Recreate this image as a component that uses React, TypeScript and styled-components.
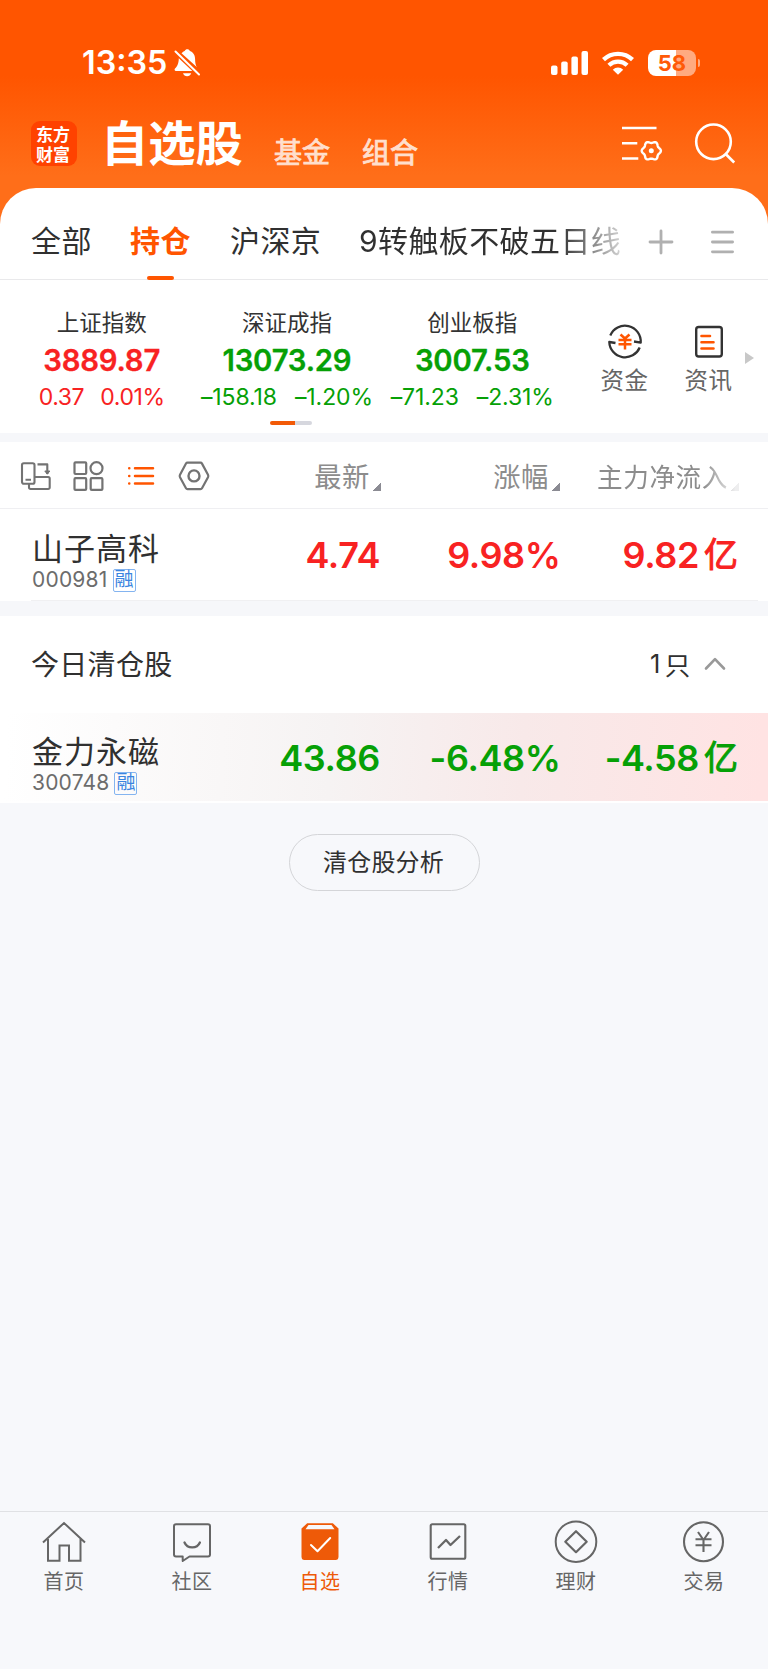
import React from "react";
import styled, { createGlobalStyle } from "styled-components";

const FONT = `Inter, "Noto Sans CJK SC", sans-serif`;
const ORANGE = "#ff5500";
const RED = "#f82222";
const GREEN = "#06a006";

const GlobalStyle = createGlobalStyle`
  * { box-sizing: border-box; }
  body { margin: 0; background: #fff; font-family: ${FONT}; color: #303030; }
  svg { display: block; flex: none; overflow: visible; }
`;

const Screen = styled.div`
  width: 768px;
  height: 1669px;
  display: flex;
  flex-direction: column;
  background: #f7f8fb;
  white-space: nowrap;
`;

/* ---------- header ---------- */
const Hero = styled.header`
  height: 228px;
  margin-bottom: -40px;
  flex: none;
  background: linear-gradient(180deg, #ff5500 0, #ff5500 76px, #ff6e19 176px, #ff6e19 100%);
`;
const StatusBar = styled.div`
  height: 100px;
  padding: 25px 68px 0 82px;
  display: flex;
  align-items: center;
  color: #fff;
`;
const Clock = styled.span`
  width: 92px;
  font-size: 32.3px;
  font-weight: 600;
  line-height: 40px;
`;
const StatusIcons = styled.div`
  margin-left: auto;
  display: flex;
  align-items: center;
  gap: 14px;
`;
const BatteryWrap = styled.div`
  display: flex;
  align-items: center;
  gap: 2px;
`;
const Battery = styled.div`
  width: 48px;
  height: 26px;
  border-radius: 8px;
  background: linear-gradient(90deg, #fff 58%, #ffaa80 58%);
  color: #ff5a08;
  font-size: 22px;
  font-weight: 700;
  line-height: 26px;
  text-align: center;
`;
const BatteryTip = styled.i`
  width: 2px;
  height: 8px;
  border-radius: 0 3px 3px 0;
  background: #ffaa80;
`;
const TitleBar = styled.div`
  height: 88px;
  padding: 0 33px 0 31px;
  display: flex;
  align-items: flex-start;
  color: #fff;
`;
const Logo = styled.div`
  width: 46px;
  height: 45px;
  margin-top: 21px;
  padding: 3px 6px 0 5px;
  border-radius: 9px;
  background: #ff4200;
  font: 700 17px/19.5px "Noto Sans CJK SC", sans-serif;
  white-space: normal;
  word-break: break-all;
`;
const Title = styled.h1`
  margin: 13.5px 0 0 24px;
  width: 173px;
  font-size: 47.3px;
  font-weight: 700;
  line-height: 60px;
`;
const SubTitle = styled.span`
  width: 88px;
  margin-top: 33px;
  font-size: 28px;
  line-height: 40px;
  color: #ffdfcd;
  -webkit-text-stroke: 0.9px #ffdfcd;
`;
const HeaderActions = styled.div`
  display: flex;
  gap: 33px;
  margin: 23px 0 0 auto;
`;

/* ---------- group tabs ---------- */
const Tabs = styled.nav`
  height: 92px;
  flex: none;
  padding: 0 34.5px 0 31px;
  display: flex;
  background: #fff;
  border-bottom: 1px solid #e9e9eb;
  border-radius: 36px 36px 0 0;
`;
const Tab = styled.div<{ $w: number; $active?: boolean; $fade?: boolean }>`
  width: ${(p) => p.$w}px;
  height: 92px;
  padding-top: 33px;
  display: flex;
  flex-direction: column;
  font-size: 30px;
  line-height: 40px;
  letter-spacing: 0.4px;
  ${(p) => p.$active && `color: ${ORANGE}; font-weight: 700;`}
  ${(p) =>
    p.$fade &&
    `background: linear-gradient(90deg, #303030 200px, #d8d8d8 264px); background-clip: text; -webkit-background-clip: text; color: transparent;`}
`;
const TabLine = styled.i`
  width: 27px;
  height: 4px;
  margin: 15px 0 0 17px;
  border-radius: 2px;
  background: ${ORANGE};
`;
const TabActions = styled.div`
  display: flex;
  gap: 38px;
  align-items: center;
  margin-left: auto;
  height: 107px;
`;

/* ---------- market indices ---------- */
const Indices = styled.section`
  height: 153px;
  flex: none;
  display: flex;
  padding-left: 9px;
  background: #fff;
`;
const IndexArea = styled.div`
  width: 563px;
  flex: none;
`;
const IndexList = styled.div`
  display: flex;
  padding-top: 26px;
  height: 141px;
`;
const IndexCell = styled.div<{ $color: string }>`
  width: 185.3px;
  display: flex;
  flex-direction: column;
  align-items: center;
  color: ${(p) => p.$color};
`;
const IndexName = styled.span`
  font-size: 22.5px;
  line-height: 34px;
  color: #333;
`;
const IndexValue = styled.strong`
  font-size: 29.3px;
  font-weight: 600;
  line-height: 40px;
  padding-top: 1px;
  letter-spacing: -0.2px;
  -webkit-text-stroke: 0.3px currentColor;
`;
const IndexChange = styled.span<{ $wide: boolean }>`
  display: flex;
  gap: ${(p) => (p.$wide ? 18 : 16)}px;
  font-size: 23px;
  line-height: 33px;
  letter-spacing: ${(p) => (p.$wide ? -0.1 : -0.4)}px;
`;
const Pager = styled.div`
  width: 42px;
  height: 4px;
  margin-left: 261px;
  border-radius: 2px;
  background: linear-gradient(90deg, #f25a07 25px, #d6d7de 25px);
`;
const Shortcuts = styled.div`
  display: flex;
  flex: none;
  padding: 44px 0 0 10.5px;
`;
const Shortcut = styled.div`
  width: 84px;
  display: flex;
  flex-direction: column;
  align-items: center;
  gap: 4px;
  font-size: 23.5px;
  line-height: 34px;
  letter-spacing: 0.6px;
  color: #666;
`;
const MoreArrow = styled.i`
  margin: 72px 0 0 -5.5px;
  width: 0;
  height: 0;
  border: solid transparent;
  border-width: 6px 0 6px 9px;
  border-left-color: #c8c8c8;
`;

/* ---------- stock table ---------- */
const Gap = styled.div<{ $h: number }>`
  height: ${(p) => p.$h}px;
  flex: none;
  background: #f6f7fa;
`;
const Toolbar = styled.div`
  height: 67px;
  flex: none;
  padding-left: 20px;
  display: flex;
  align-items: center;
  background: #fff;
  border-bottom: 1px solid #efeff2;
`;
const ViewModes = styled.div`
  width: 361px;
  display: flex;
  gap: 22.4px;
  align-items: center;
  margin: 1px -67px 0 0;
`;
const Column = styled.div<{ $w: number; $size?: number; $fade?: boolean }>`
  width: ${(p) => p.$w}px;
  margin-top: 5px;
  display: flex;
  justify-content: flex-end;
  align-items: flex-end;
  gap: 3px;
  font-size: ${(p) => p.$size ?? 27.3}px;
  line-height: 36px;
  letter-spacing: 0.6px;
  color: #8c8c8c;
  ${(p) => p.$fade && `mask-image: linear-gradient(90deg, #000 80%, rgba(0, 0, 0, 0.15) 98%);`}
`;
const SortMark = styled.i`
  width: 8px;
  height: 8px;
  margin-bottom: 5px;
  background: linear-gradient(135deg, transparent 50%, #8b8b93 50%);
`;
const StockRow = styled.div<{ $cleared?: boolean }>`
  height: ${(p) => (p.$cleared ? 88 : 91)}px;
  flex: none;
  padding: ${(p) => (p.$cleared ? 19 : 20)}px 30px 0 32px;
  display: flex;
  background: ${(p) => (p.$cleared ? "linear-gradient(93deg, #fff 1%, #f6f3f3 43%, #f8e9e9 68%, #ffe3e3 99%)" : "#fff")};
`;
const StockId = styled.div`
  width: 170px;
`;
const StockName = styled.div`
  font-size: 31px;
  line-height: 40px;
  height: 41px;
  letter-spacing: 1px;
`;
const StockCode = styled.div`
  display: flex;
  align-items: center;
  gap: 5px;
  height: 20px;
  font-size: 21px;
  line-height: 20px;
  letter-spacing: 0.2px;
  color: #6c6c6c;
`;
const MarginBadge = styled.span`
  width: 23px;
  height: 23px;
  border: 1.5px solid #84b4f0;
  border-radius: 2px;
  font-size: 19px;
  line-height: 20px;
  letter-spacing: 0;
  display: flex;
  justify-content: center;
  color: #3b85e0;
`;
const Figure = styled.div<{ $w: number; $color: string }>`
  width: ${(p) => p.$w}px;
  display: flex;
  justify-content: flex-end;
  gap: 4px;
  padding-top: 6px;
  font-size: 36px;
  font-weight: 600;
  line-height: 40px;
  letter-spacing: -0.4px;
  color: ${(p) => p.$color};
`;
const Unit = styled.span`
  margin-left: 1px;
  font-size: 34px;
  font-weight: 400;
  letter-spacing: 0;
  -webkit-text-stroke: 1px currentColor;
`;
const Divider = styled.div<{ $clear?: boolean }>`
  height: ${(p) => (p.$clear ? 2 : 1)}px;
  flex: none;
  padding: 0 10px 0 31px;
  background: #fff;
  &::after {
    content: "";
    display: block;
    height: 1px;
    background: ${(p) => (p.$clear ? "#fff" : "#f0f0f2")};
  }
`;
const SectionHead = styled.div`
  height: 97px;
  flex: none;
  padding: 0 42.5px 4px 31px;
  display: flex;
  align-items: center;
  background: #fff;
  font-size: 28px;
  letter-spacing: 0.3px;
`;
const Count = styled.span`
  display: flex;
  align-items: center;
  gap: 4px;
  margin: 2px 13px 0 auto;
  font-size: 25.5px;
`;
const Analysis = styled.button`
  width: 191px;
  height: 57px;
  flex: none;
  margin: 31px auto 0;
  padding: 1px 1px 0 0;
  border: 1.5px solid #d4d5d8;
  border-radius: 29px;
  background: transparent;
  font: 400 24px/36px ${FONT};
  letter-spacing: 0.2px;
  color: #303030;
`;

/* ---------- bottom navigation ---------- */
const BottomNav = styled.nav`
  height: 158px;
  flex: none;
  margin-top: auto;
  display: flex;
  border-top: 1px solid #e0e1e4;
`;
const NavItem = styled.div<{ $active?: boolean }>`
  width: 128px;
  padding-top: 9px;
  display: flex;
  flex-direction: column;
  align-items: center;
  gap: 1px;
  font-size: 20px;
  line-height: 32px;
  letter-spacing: 0.5px;
  color: ${(p) => (p.$active ? "#ee5a08" : "#666")};
`;

/* ---------- icons ---------- */
type IconProps = { w: number; h: number; stroke?: string; sw?: number; children: React.ReactNode };
const Icon = ({ w, h, stroke = "currentColor", sw = 2, children }: IconProps) => (
  <svg width={w} height={h} viewBox={`0 0 ${w} ${h}`} fill="none" stroke={stroke} strokeWidth={sw} strokeLinejoin="round">
    {children}
  </svg>
);

/* six-lobed gear outline */
const gearPoints = (cx: number, cy: number) =>
  Array.from({ length: 72 }, (_, i) => {
    const a = (i * Math.PI) / 36;
    const r = 8.7 + 0.9 * Math.cos(6 * a);
    return `${(cx + r * Math.cos(a)).toFixed(2)},${(cy + r * Math.sin(a)).toFixed(2)}`;
  }).join(" ");

const BellOff = () => (
  <Icon w={26} h={28} sw={0}>
    <path
      fill="#fff"
      d="M7.5 4.2C8.700 3 9.800 2.300 10.700 2c.5-1.200 1.500-1.800 2.600-1.800s2.100.6 2.600 1.800c3.600 1.200 5.200 4.500 5.200 8.200 0 3.500.5 6 1.900 8zM4.800 9.200 18.300 22H2C.5 22 .2 20.700 1 19.600c2.300-2.500 3.700-5 3.800-10.400zM9 24.200h8.200c-.6 1.800-2.200 3-4.100 3s-3.500-1.200-4.100-3z"
    />
    <path stroke="#fff" strokeWidth="2" strokeLinecap="round" d="M1.500 2.500 25 25.500" />
  </Icon>
);
const Signal = () => (
  <Icon w={37} h={24} sw={0}>
    <g fill="#fff">
      <rect y="14.500" width="6.500" height="9.500" rx="2" />
      <rect x="10.200" y="10.500" width="6.500" height="13.500" rx="2" />
      <rect x="20.400" y="5.500" width="6.500" height="18.500" rx="2" />
      <rect x="30.500" width="6.500" height="24" rx="2" />
    </g>
  </Icon>
);
const Wifi = () => (
  <Icon w={32} h={24} stroke="#fff" sw={4.3}>
    <path d="M1.500 8.600a21 21 0 0 1 29 0M6.900 14.200a13.200 13.200 0 0 1 18.200 0" />
    <path d="M16 23.800 10.800 18.700a7.400 7.400 0 0 1 10.400 0z" fill="#fff" strokeWidth="0" />
  </Icon>
);
const FilterSettings = () => (
  <Icon w={40} h={37} stroke="#fff" sw={2.6}>
    <path d="M0 5h34.500M0 20.300h15.300M0 35.500h16.300" />
    <polygon strokeWidth="2.400" points={gearPoints(29.3, 27.8)} />
    <circle cx="29.300" cy="27.800" r="2.500" fill="#fff" strokeWidth="0" />
  </Icon>
);
const Search = () => (
  <Icon w={40} h={40} stroke="#fff" sw={2.6}>
    <circle cx="18.500" cy="18.800" r="17.300" />
    <path d="M30.700 31l8.500 8.500" />
  </Icon>
);
const Plus = () => (
  <Icon w={24} h={24} stroke="#b0b0b0" sw={2.8}>
    <path strokeLinecap="round" d="M1 12h22M12 1v22" />
  </Icon>
);
const Menu = () => (
  <Icon w={23} h={24} stroke="#b0b0b0" sw={2.8}>
    <path strokeLinecap="round" d="M1.400 2.200h20.200M1.400 12h20.200M1.400 21.800h20.200" />
  </Icon>
);
const Funds = () => (
  <Icon w={34} h={36} stroke="#333" sw={2.3}>
    <path d="M2.300 11.500A15.800 15.800 0 0 1 32.700 18.600L26 17.500M31.700 23.500A15.800 15.800 0 0 1 1.300 18L7.500 19" />
    <path stroke={ORANGE} strokeWidth="2.500" d="m12.500 10.500 4.500 4 4.500-4M10.500 16h13M10.500 20.300h13M17 14.500v11" />
  </Icon>
);
const News = () => (
  <Icon w={28} h={36} stroke="#333" sw={2.4}>
    <rect x="1.200" y="3" width="25.600" height="29.500" rx="2.500" />
    <path stroke={ORANGE} strokeWidth="2.600" strokeLinecap="round" d="M6.500 12h8.500M6.500 18.300h12M6.500 24.500h12" />
  </Icon>
);
const Rotate = () => (
  <Icon w={31} h={30} stroke="#737373" sw={2.1}>
    <rect x="2" y="2.200" width="12.500" height="20.500" rx="1.800" />
    <path d="M5.500 18.700h5.500M17.500 3.400h9.800v9.500M14.500 16h13.700a1.500 1.500 0 0 1 1.500 1.500v9a1.500 1.500 0 0 1-1.500 1.500H10.500A1.500 1.500 0 0 1 9 26.500V23" />
    <path d="M24.800 10h5l-2.500 3.200z" fill="#737373" strokeWidth="1" />
  </Icon>
);
const Grid = () => (
  <Icon w={31} h={30} stroke="#737373" sw={2.2}>
    <rect x="1.500" y="1.300" width="11.700" height="11.700" rx="1" />
    <circle cx="23.500" cy="7.200" r="6" />
    <rect x="1.500" y="17.200" width="11.700" height="11.700" rx="1" />
    <rect x="17.700" y="17.200" width="11.700" height="11.700" rx="1" />
  </Icon>
);
const List = () => (
  <Icon w={30} h={30} stroke={ORANGE} sw={2.5}>
    <path strokeLinecap="round" d="M8 7.200h18M8 14.900h18M8 22.600h18M2.200 7.200h.1M2.200 14.900h.1M2.200 22.600h.1" />
  </Icon>
);
const Hex = () => (
  <Icon w={30} h={30} stroke="#737373" sw={2.2}>
    <path d="M8.500 1.700h13q1 0 1.500.9l6 11.200q.6 1.200 0 2.400l-6 11q-.5.9-1.500.9h-13q-1 0-1.500-.9l-6-11q-.6-1.200 0-2.400L7 2.600q.5-.9 1.500-.9z" />
    <circle cx="15" cy="14.900" r="5.500" strokeWidth="2.400" />
  </Icon>
);
const ChevronUp = () => (
  <Icon w={22} h={14} stroke="#999" sw={2.6}>
    <path strokeLinecap="round" d="m2 12.500 9-9.300 9 9.300" />
  </Icon>
);

const HomeIcon = () => (
  <Icon w={44} h={44} sw={2}>
    <path strokeLinejoin="miter" d="M1 21.500 22 2l21 19.500M6 18v21.700h11.500V24.500H27v15.200h11.500V18" />
  </Icon>
);
const CommunityIcon = () => (
  <Icon w={40} h={44} sw={2}>
    <path d="M4 3.200h32q2 0 2 2v28.300q0 2-2 2H17.500L10.700 40v-4.500H4q-2 0-2-2V5.200q0-2 2-2z" />
    <path strokeWidth="2.300" strokeLinecap="round" d="M12.500 21.500c2.800 6.500 12.600 6.500 15.400 0" />
  </Icon>
);
const FavoriteIcon = () => (
  <Icon w={38} h={44} sw={0}>
    <path fill="#ee5a08" d="M6.200 2.300h25.600L37.500 7.500v28q0 3.500-3 3.500h-31q-3 0-3-3.500v-28z" />
    <path fill="#f7f8fb" d="M7.500 4h23l3 4.200h-29z" />
    <path stroke="#fff" strokeWidth="2" strokeLinecap="round" d="m10 24 6.500 6.200L29.200 17" />
  </Icon>
);
const QuotesIcon = () => (
  <Icon w={38} h={44} sw={2.1}>
    <rect x="1.700" y="3.200" width="34.600" height="34.600" rx="1.500" />
    <path strokeWidth="2.300" d="m9 27 8-8 4.500 5 9.500-9" />
  </Icon>
);
const WealthIcon = () => (
  <Icon w={44} h={44} sw={2}>
    <circle cx="22" cy="20.700" r="20.300" />
    <path strokeWidth="2.200" d="M22 10.200 32.700 20.700 22 31.200 11.300 20.700z" />
  </Icon>
);
const TradeIcon = () => (
  <Icon w={44} h={44} sw={2.1}>
    <circle cx="21.500" cy="20.700" r="19.500" />
    <path d="m16 11 5.500 8 5.500-8M13.500 18.200h16M13.500 24.200h16M21.500 18v13" />
  </Icon>
);

const indices = [
  { name: "上证指数", value: "3889.87", diff: "0.37", pct: "0.01%", color: RED },
  { name: "深证成指", value: "13073.29", diff: "–158.18", pct: "–1.20%", color: GREEN },
  { name: "创业板指", value: "3007.53", diff: "–71.23", pct: "–2.31%", color: GREEN },
];

const navItems = [
  { label: "首页", icon: <HomeIcon /> },
  { label: "社区", icon: <CommunityIcon /> },
  { label: "自选", icon: <FavoriteIcon />, active: true },
  { label: "行情", icon: <QuotesIcon /> },
  { label: "理财", icon: <WealthIcon /> },
  { label: "交易", icon: <TradeIcon /> },
];

type StockProps = { name: string; code: string; price: string; pct: string; flow: string; color: string; cleared?: boolean };
const Stock = ({ name, code, price, pct, flow, color, cleared }: StockProps) => (
  <StockRow $cleared={cleared}>
    <StockId>
      <StockName>{name}</StockName>
      <StockCode>
        {code}
        <MarginBadge>融</MarginBadge>
      </StockCode>
    </StockId>
    <Figure $w={178} $color={color}>{price}</Figure>
    <Figure $w={180.5} $color={color}>{pct}</Figure>
    <Figure $w={177.5} $color={color}>
      {flow}
      <Unit>亿</Unit>
    </Figure>
  </StockRow>
);

export default function App() {
  return (
    <Screen>
      <GlobalStyle />
      <Hero>
        <StatusBar>
          <Clock>13:35</Clock>
          <BellOff />
          <StatusIcons>
            <Signal />
            <Wifi />
            <BatteryWrap>
              <Battery>58</Battery>
              <BatteryTip />
            </BatteryWrap>
          </StatusIcons>
        </StatusBar>
        <TitleBar>
          <Logo>东方财富</Logo>
          <Title>自选股</Title>
          <SubTitle>基金</SubTitle>
          <SubTitle>组合</SubTitle>
          <HeaderActions>
            <FilterSettings />
            <Search />
          </HeaderActions>
        </TitleBar>
      </Hero>

      <Tabs>
        <Tab $w={99}>全部</Tab>
        <Tab $w={100} $active>
          持仓
          <TabLine />
        </Tab>
        <Tab $w={129}>沪深京</Tab>
        <Tab $w={264} $fade>9转触板不破五日线</Tab>
        <TabActions>
          <Plus />
          <Menu />
        </TabActions>
      </Tabs>

      <Indices>
        <IndexArea>
          <IndexList>
            {indices.map((it) => (
              <IndexCell key={it.name} $color={it.color}>
                <IndexName>{it.name}</IndexName>
                <IndexValue>{it.value}</IndexValue>
                <IndexChange $wide={it.diff.length > 4}>
                  <span>{it.diff}</span>
                  <span>{it.pct}</span>
                </IndexChange>
              </IndexCell>
            ))}
          </IndexList>
          <Pager />
        </IndexArea>
        <Shortcuts>
          <Shortcut>
            <Funds />
            资金
          </Shortcut>
          <Shortcut>
            <News />
            资讯
          </Shortcut>
        </Shortcuts>
        <MoreArrow />
      </Indices>

      <Gap $h={9} />

      <Toolbar>
        <ViewModes>
          <Rotate />
          <Grid />
          <List />
          <Hex />
        </ViewModes>
        <Column $w={67}>
          最新
          <SortMark />
        </Column>
        <Column $w={179}>
          涨幅
          <SortMark />
        </Column>
        <Column $w={179} $size={25.6} $fade>
          主力净流入
          <SortMark />
        </Column>
      </Toolbar>
      <Stock name="山子高科" code="000981" price="4.74" pct="9.98%" flow="9.82" color={RED} />
      <Divider />
      <Gap $h={15} />

      <SectionHead>
        今日清仓股
        <Count>
          <span>1</span>
          <span>只</span>
        </Count>
        <ChevronUp />
      </SectionHead>
      <Stock name="金力永磁" code="300748" price="43.86" pct="-6.48%" flow="-4.58" color={GREEN} cleared />
      <Divider $clear />

      <Analysis>清仓股分析</Analysis>

      <BottomNav>
        {navItems.map((it) => (
          <NavItem key={it.label} $active={it.active}>
            {it.icon}
            {it.label}
          </NavItem>
        ))}
      </BottomNav>
    </Screen>
  );
}
